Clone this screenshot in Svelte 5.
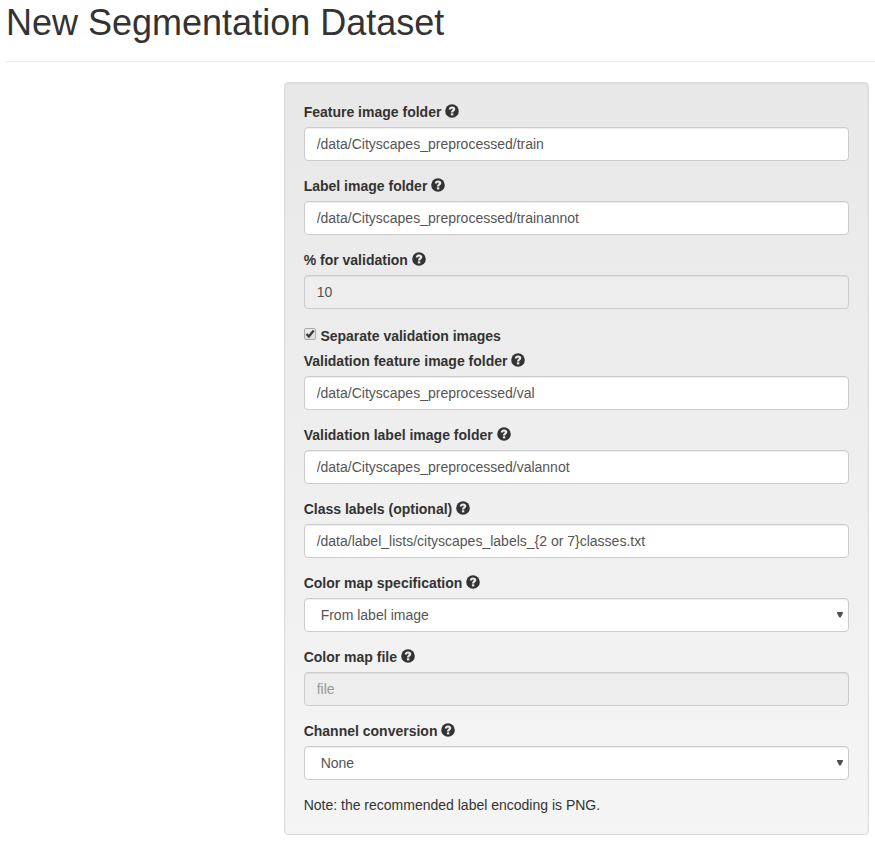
<script>
  let fields = $state([
    { id: 'feature', label: 'Feature image folder', value: '/data/Cityscapes_preprocessed/train' },
    { id: 'label', label: 'Label image folder', value: '/data/Cityscapes_preprocessed/trainannot' },
    { id: 'percent', label: '% for validation', value: '10', disabled: true },
    { id: 'val-feature', label: 'Validation feature image folder', value: '/data/Cityscapes_preprocessed/val' },
    { id: 'val-label', label: 'Validation label image folder', value: '/data/Cityscapes_preprocessed/valannot' },
    { id: 'classes', label: 'Class labels (optional)', value: '/data/label_lists/cityscapes_labels_{2 or 7}classes.txt' },
    { id: 'map-spec', label: 'Color map specification', value: 'From label image', options: ['From label image', 'From text file'] },
    { id: 'map-file', label: 'Color map file', value: '', placeholder: 'file', disabled: true },
    { id: 'channel', label: 'Channel conversion', value: 'None', options: ['None', 'RGB', 'Grayscale'] }
  ]);
  let separate = $state(true);
</script>

{#snippet help()}
  <svg class="help" viewBox="0 0 14 14" aria-hidden="true">
    <circle cx="7" cy="7" r="6.8" fill="#333" />
    <path d="M3.8 5.6C3.9 3.5 5.1 2.5 7.1 2.5c2 0 3.2 1 3.2 2.6 0 1.9-2 2-2 3.4H5.9c0-2.2 1.9-2.2 1.9-3.2 0-.5-.3-.8-.8-.8-.6 0-.9.4-.9 1.1z" fill="#eaeaea" />
    <rect x="5.9" y="9.3" width="2.4" height="2.1" fill="#eaeaea" />
  </svg>
{/snippet}

<main>
  <header><h1>New Segmentation Dataset</h1></header>
  <form class="well">
    {#each fields as field (field.id)}
      {#if field.id === 'val-feature'}
        <label class="check"><input type="checkbox" bind:checked={separate} /><span class="box">
          {#if separate}
            <svg viewBox="0 0 12 12" aria-hidden="true"><path d="M2.5 6 4.9 8.5 9.7 2.6" fill="none" stroke="#3c3c3c" stroke-width="2.4" /></svg>
          {/if}
        </span>Separate validation images</label>
      {/if}
      <div class="group">
        <label for={field.id}>{field.label} {@render help()}</label>
        {#if field.options}
          <div class="select">
            <select id={field.id} bind:value={field.value}>
              {#each field.options as option}<option>{option}</option>{/each}
            </select>
            <svg class="arrow" viewBox="0 0 6 6" aria-hidden="true"><path d="M0 0h6v1L3.7 5.6H2.3L0 1z" fill="#505050" /></svg>
          </div>
        {:else}
          <input id={field.id} type="text" bind:value={field.value} placeholder={field.placeholder} disabled={field.disabled} />
        {/if}
      </div>
    {/each}
    <p>Note: the recommended label encoding is PNG.</p>
  </form>
</main>

<style>
  :global(body) { background: #fff; overflow: hidden; }
  main {
    font: 14px/20px "Liberation Sans", Arial, sans-serif;
    color: #333;
    padding: 2px 0 7px 6px;
    box-sizing: border-box;
    height: 842px;
  }
  main * { box-sizing: border-box; }
  header { height: 60px; padding-top: 1px; border-bottom: 1px solid #eee; }
  h1 { margin: 0; font-size: 36px; line-height: 40px; font-weight: 400; }
  .well {
    margin: 20px 6px 0 277.66px;
    height: 753px;
    padding: 19px;
    padding-right: 19px;
    border: 1px solid #dcdcdc;
    border-radius: 4px;
    background: linear-gradient(#e8e8e8, #f5f5f5);
    box-shadow: inset 0 1px 3px rgba(0, 0, 0, .05), 0 1px 0 rgba(255, 255, 255, .1);
  }
  .group { margin-bottom: 15px; }
  label { display: block; height: 20px; margin-bottom: 5px; font-weight: 700; white-space: nowrap; }
  .help { position: relative; top: -.6px; display: inline-block; width: 14px; height: 14px; vertical-align: -2px; }
  input[type="text"], select {
    display: block;
    width: 100%;
    height: 34px;
    margin: 0;
    padding: 6px 12px;
    font: inherit;
    color: #555;
    background: #fff;
    border: 1px solid #ccc;
    border-radius: 4px;
    box-shadow: inset 0 1px 1px rgba(0, 0, 0, .075);
    appearance: none;
  }
  input[type="text"]:disabled { background: #eee; opacity: 1; }
  input::placeholder { color: #999; opacity: 1; }
  select { padding-left: 16px; }
  .select { position: relative; }
  .arrow { position: absolute; right: 6px; top: 14px; width: 6px; height: 6px; pointer-events: none; }
  .check { display: flex; height: 27px; margin: 0; padding-top: 2px; }
  .check input { position: absolute; opacity: 0; margin: 0; }
  .box {
    width: 12px;
    height: 12px;
    margin: 2px 4.4px 0 .33px;
    border: 1px solid #aaa;
    border-radius: 2px;
    background: linear-gradient(#eee, #ddd);
  }
  .box svg { display: block; width: 12px; height: 12px; margin: -1px; overflow: visible; }
  p { margin: 0; }
</style>
